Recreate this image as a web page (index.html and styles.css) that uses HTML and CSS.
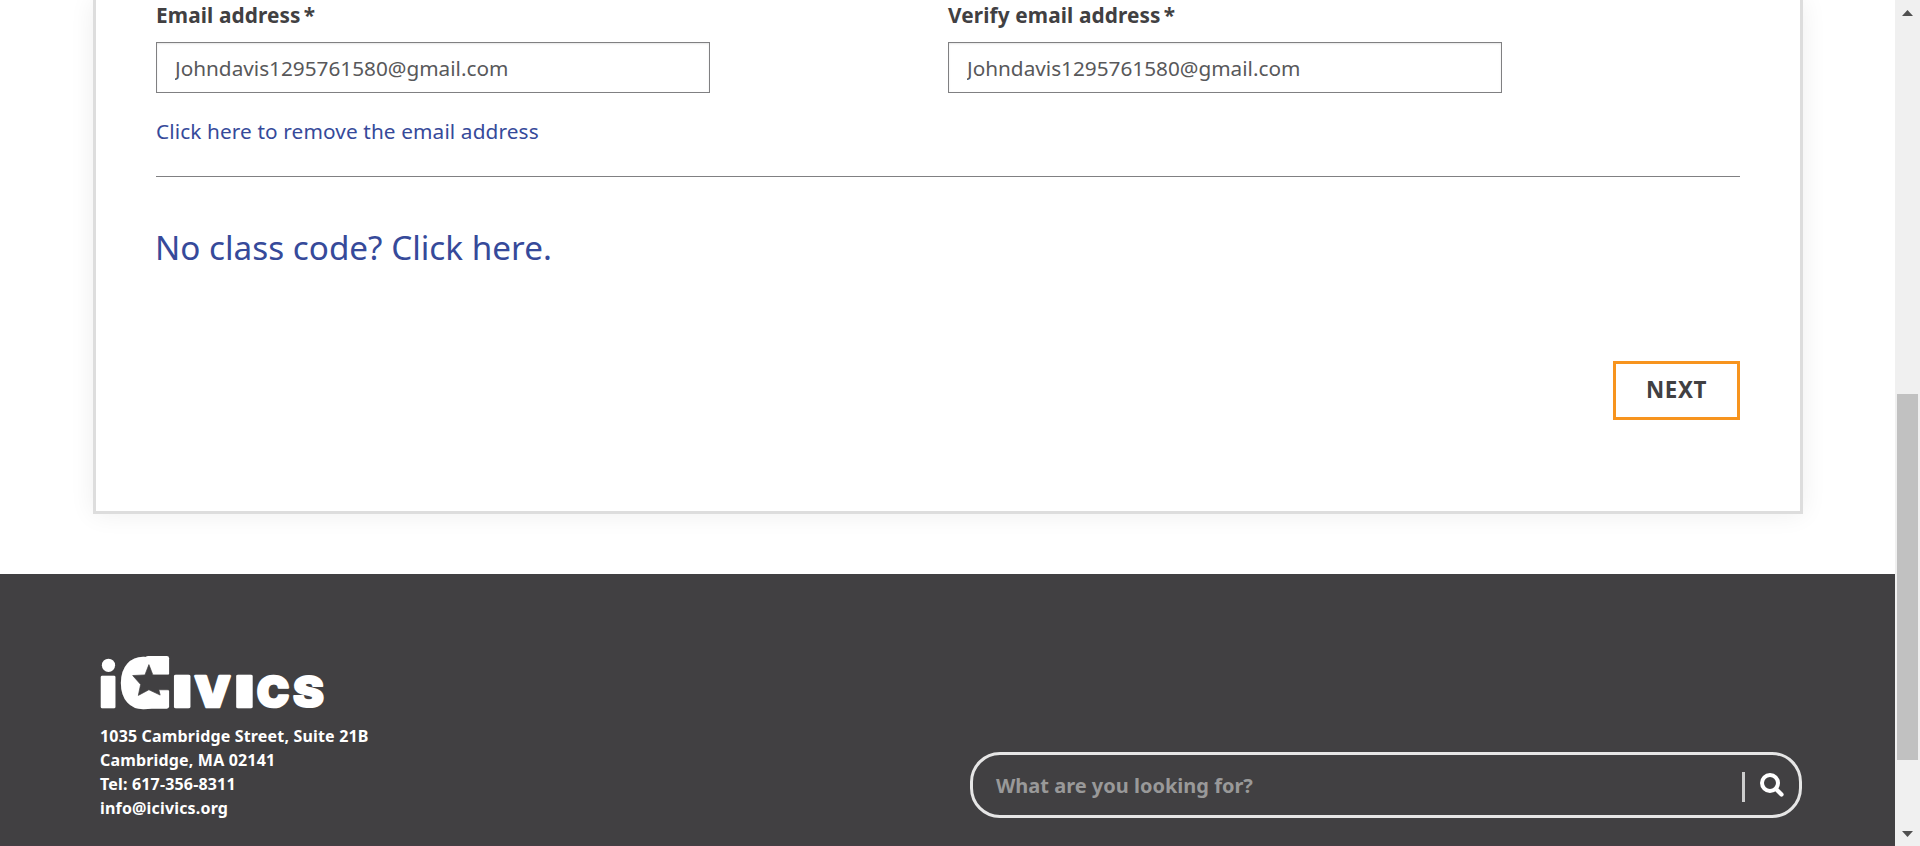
FILE: index.html
```html
<!DOCTYPE html>
<html lang="en">
<head>
<meta charset="utf-8">
<title>iCivics</title>
<link rel="stylesheet" href="styles.css">
</head>
<body>
<div class="window">
  <div class="page">
    <main class="main">
      <form class="card">
        <div class="fields">
          <div class="field">
            <label class="label" for="mail">Email address<span class="star">*</span></label>
            <input class="input" id="mail" type="text" value="Johndavis1295761580@gmail.com">
          </div>
          <div class="field">
            <label class="label" for="verify">Verify email address<span class="star">*</span></label>
            <input class="input" id="verify" type="text" value="Johndavis1295761580@gmail.com">
          </div>
        </div>
        <a class="remove"><span>Click here to remove the email address</span></a>
        <hr class="rule">
        <a class="no-code"><span>No class code? Click here.</span></a>
        <div class="actions"><button class="next" type="button"><span>NEXT</span></button></div>
      </form>
    </main>
    <footer class="footer">
      <div class="contact">
        <svg class="logo" viewBox="60 78 676 160" role="img" aria-label="iCivics">
          <circle cx="84" cy="106" r="20" fill="#fff"/>
          <g class="wordmark">
            <text transform="translate(56 232) scale(1.1 1)" font-size="164">ı</text>
            <text transform="translate(119 232) scale(.91 1)" font-size="201">C</text>
            <text transform="translate(279 233) scale(1.5 1)" font-size="127">I</text>
            <text transform="translate(344 233) scale(1.08 1)" font-size="127">V</text>
            <text transform="translate(467 233) scale(1.5 1)" font-size="127">I</text>
            <text transform="translate(532 233) scale(1.02 1)" font-size="127">C</text>
            <text transform="translate(641 233) scale(1.1 1)" font-size="127" stroke-width="6">S</text>
          </g>
          <circle cx="190" cy="157" r="58" fill="#fff"/>
          <rect x="196" y="78" width="71" height="60" rx="7" fill="#fff"/>
          <rect x="196" y="178" width="71" height="59" rx="7" fill="#fff"/>
          <path class="logo-star" d="M206 104L218 135H270V180H236L240 196L206 180L174 197L181 164L157 137L194 135Z"/>
        </svg>
        <address class="address">
          <span>1035 Cambridge Street, Suite 21B</span>
          <span>Cambridge, MA 02141</span>
          <span>Tel: 617-356-8311</span>
          <span>info@icivics.org</span>
        </address>
      </div>
      <div class="search">
        <span class="prompt">What are you looking for?</span>
        <span class="divider"></span>
        <svg class="glass" viewBox="0 0 24 24"><circle cx="10" cy="10" r="8" fill="none" stroke="#fff" stroke-width="4"/><path d="M16 16L21.500 21.500" stroke="#fff" stroke-width="4.2" stroke-linecap="round"/></svg>
      </div>
    </footer>
  </div>
  <div class="scrollbar">
    <svg class="arrow" viewBox="0 0 11 6"><path d="M5.5 0L11 6H0Z"/></svg>
    <div class="track"><div class="thumb"></div></div>
    <svg class="arrow" viewBox="0 0 11 6"><path d="M0 0H11L5.500 6Z"/></svg>
  </div>
</div>
</body>
</html>
```
FILE: styles.css
```css
* { box-sizing: border-box; }
body { margin: 0; font-family: "Noto Sans", sans-serif; background: #fff; overflow: hidden; }
.window { display: flex; width: 1920px; height: 846px; overflow: hidden; }
.page { width: 1895px; display: flex; flex-direction: column; }
.main { height: 574px; padding: 0 92px 60px 93px; overflow: hidden; }
.card { height: 514px; border: 3px solid #ddd; border-top: 0; padding: 0 60px; box-shadow: 0 0 24px rgba(0,0,0,.07); display: flex; flex-direction: column; }
.fields { display: grid; grid-template-columns: 1fr 1fr; }
.field { display: flex; flex-direction: column; }
.label { height: 42px; font-size: 20.8px; font-weight: 700; line-height: 30px; letter-spacing: .12px; color: #414042; }
.star { margin-left: 3px; }
.input { width: 554px; height: 51px; padding: 0 18px; border: 1px solid #808082; border-radius: 0; font: 20.75px "Noto Sans", sans-serif; color: #58585a; background: #fff; box-shadow: inset 0 1px 2px rgba(0,0,0,.1); }
.remove { margin-top: 22px; height: 32px; line-height: 32px; font-size: 20.8px; letter-spacing: .11px; color: #364a9a; }
.rule { width: 100%; height: 1px; margin: 29px 0 0; border: 0; background: #808082; }
.no-code { margin-top: 45px; height: 51px; line-height: 50px; font-size: 33.28px; text-indent: -1px; color: #364a9a; }
.actions { margin-top: 88px; display: flex; justify-content: flex-end; }
.next { width: 127px; height: 59px; border: 3px solid #f7941e; background: #fff; color: #414042; font: bold 22.4px "Noto Sans", sans-serif; letter-spacing: .6px; padding: 0 0 2px; }
.footer { flex: 1; padding: 82px 93px 0 100px; background: #414042; display: flex; justify-content: space-between; border-bottom: 1px solid #463e45; }
.contact { display: flex; flex-direction: column; }
.logo { width: 225px; height: 53px; overflow: visible; }
.wordmark { font-family: Inter, sans-serif; font-weight: 900; fill: #fff; stroke: #fff; stroke-width: 8; stroke-linejoin: round; }
.logo-star { fill: #414042; stroke: #414042; stroke-width: 2; stroke-linejoin: round; }
.address { margin-top: 15px; display: flex; flex-direction: column; font: bold 16px/24px "Noto Sans", sans-serif; letter-spacing: .17px; color: #fff; white-space: nowrap; }
.search { width: 832px; height: 66px; margin-top: 96px; padding: 0 15px 0 23px; border: 3px solid #e6e6e6; border-radius: 30px; display: flex; align-items: center; }
.prompt { flex: 1; font-size: 20px; font-weight: bold; color: #999; }
.divider { width: 3px; height: 30px; margin: 4px 15px 0 0; background: #ccc; }
.glass { width: 24px; height: 24px; }
.scrollbar { width: 25px; padding: 10px 0 9px; background: #f0f0f0; display: flex; flex-direction: column; align-items: center; }
.arrow { width: 11px; height: 6px; fill: #505050; }
.track { flex: 1; width: 21px; padding-top: 378px; }
.thumb { height: 366px; background: #c1c1c1; }
```
